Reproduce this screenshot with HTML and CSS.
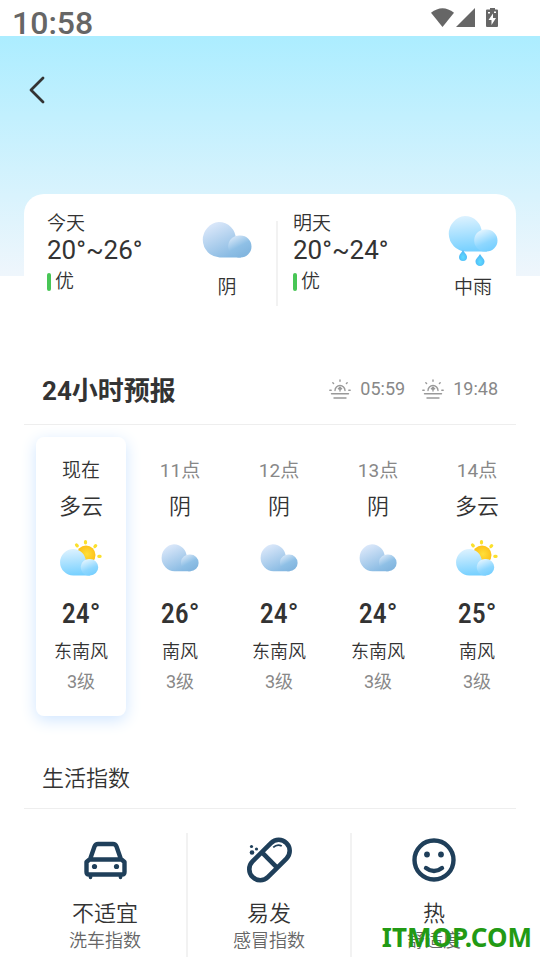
FILE: index.html
```html
<!DOCTYPE html>
<html lang="zh-CN">
<head>
<meta charset="utf-8">
<meta name="viewport" content="width=device-width, initial-scale=1">
<title>24小时预报</title>
<link rel="stylesheet" href="styles.css">
</head>
<body>
<svg class="defs" width="0" height="0" aria-hidden="true">
  <defs>
    <linearGradient id="greyBig" x1="0.2" y1="0" x2="0.7" y2="1"><stop offset="0" stop-color="#dfeafb"/><stop offset="1" stop-color="#86b9e2"/></linearGradient>
    <linearGradient id="greySmall" x1="0.15" y1="0.1" x2="0.6" y2="0.9"><stop offset="0" stop-color="#d3e5f7"/><stop offset="0.55" stop-color="#8fc0e6"/><stop offset="1" stop-color="#83b6df"/></linearGradient>
    <linearGradient id="blueBig" x1="0.4" y1="0" x2="0.5" y2="1"><stop offset="0" stop-color="#ddf2ff"/><stop offset="1" stop-color="#76d0ff"/></linearGradient>
    <linearGradient id="blueSmall" x1="0.2" y1="0.1" x2="0.6" y2="1"><stop offset="0" stop-color="#dff3ff"/><stop offset="0.6" stop-color="#8ed7ff"/><stop offset="1" stop-color="#76cfff"/></linearGradient>
    <radialGradient id="sun" cx="0.55" cy="0.45" r="0.6"><stop offset="0" stop-color="#ffdf3a"/><stop offset="1" stop-color="#fdb90f"/></radialGradient>
    <radialGradient id="drop" cx="0.5" cy="0.65" r="0.6"><stop offset="0" stop-color="#5fdcff"/><stop offset="1" stop-color="#4db4f5"/></radialGradient>
  </defs>
  <symbol id="cloudy" viewBox="0 0 50 36">
    <path fill="url(#greyBig)" d="M16.900 0A16.900 16.900 0 0 1 33.800 17L39 35.500H17.700A17.800 17.800 0 0 1 16.900 0Z"/>
    <path fill="url(#greySmall)" d="M38.500 13.500a11 11 0 0 1 0 22H36a11 11 0 0 1 2.500-22Z"/>
  </symbol>
  <symbol id="rain" viewBox="0 0 50 51">
    <path fill="url(#blueBig)" d="M16.900 0A16.900 16.900 0 0 1 33.800 17L39 35.500H17.700A17.800 17.800 0 0 1 16.900 0Z"/>
    <path fill="url(#blueSmall)" d="M38.500 13.500a11 11 0 0 1 0 22H36a11 11 0 0 1 2.500-22Z"/>
    <path fill="url(#drop)" d="M15 34c1.500 3 4 4.500 4 7a4 4 0 0 1-8 0c0-2.500 2.500-4 4-7Z"/>
    <path fill="url(#drop)" d="M32 38c1.500 3 4.500 4.700 4.500 7.500a4.500 4.500 0 0 1-9 0c0-2.800 3-4.500 4.500-7.500Z"/>
  </symbol>
  <symbol id="partly" viewBox="0 0 42 36">
    <circle cx="26" cy="15" r="9.500" fill="url(#sun)"/>
    <g stroke="#fbe02d" stroke-width="3.200" stroke-linecap="round"><path d="M25.500 1.700v1.100M16.500 5l.8.900M35.700 5.600l-.8.900M38.800 16.300h1.300"/></g>
    <path fill="url(#blueBig)" d="M13.300 9A12.800 12.800 0 0 1 25.800 21L30 35.500H13.300A13.250 13.250 0 0 1 13.300 9Z"/>
    <path fill="url(#blueSmall)" d="M30 19a8.250 8.250 0 0 1 0 16.500H28A8.250 8.250 0 0 1 30 19Z"/>
  </symbol>
  <symbol id="horizon" viewBox="0 0 22 20">
    <g fill="none" stroke="#999" stroke-width="1.400" stroke-linecap="round">
      <path d="M6 11.500a5 5 0 1 1 10 0M11 1v1.300M3.800 3.800l.8.800M18.200 3.800l-.8.800M.8 11.200h1.400M19.800 11.200h1.400M2.500 14.800h17M5 19h12M11 12V9"/>
    </g>
    <path fill="#999" d="m11 7.300 2.500 2.500-1.300 1H9.800l-1.300-1Z"/>
  </symbol>
</svg>

<div class="status">
  <span class="status-time">10:58</span>
  <svg class="status-icons" width="68" height="20" viewBox="0 0 68 20" fill="#666" aria-hidden="true">
    <path d="M0 4.800Q11.500-4.500 23 4.800L11.500 19Z"/>
    <path d="M44 0v19H25Z"/>
    <path d="M59 0h5v1.500h2q1 0 1 1V18q0 1-1 1H56q-1 0-1-1V2.500q0-1 1-1h3Z"/>
    <path fill="#fff" d="M62 5.500 57.500 12H60.500V17L65 10H62ZM57 4h2v1.500h-2ZM63 3.500h2v1.500h-2Z"/>
  </svg>
</div>

<main class="page">
  <header class="topbar">
    <button class="back" type="button" aria-label="返回">
      <svg width="16" height="28" viewBox="0 0 16 28" fill="none" stroke="#333" stroke-width="2.800" stroke-linecap="round" stroke-linejoin="round"><path d="M14 2 2 14 14 26"/></svg>
    </button>
  </header>

  <div class="sheet">
    <section class="days">
      <article class="day">
        <div class="day-info">
          <div class="day-name">今天</div>
          <div class="day-range">20°~26°</div>
          <div class="day-air">优</div>
        </div>
        <div class="day-sky">
          <svg width="50" height="51" viewBox="0 -6 50 51"><use href="#cloudy" width="50" height="36"/></svg>
          <span>阴</span>
        </div>
      </article>
      <article class="day day-next">
        <div class="day-info">
          <div class="day-name">明天</div>
          <div class="day-range">20°~24°</div>
          <div class="day-air">优</div>
        </div>
        <div class="day-sky">
          <svg width="50" height="51"><use href="#rain" width="50" height="51"/></svg>
          <span>中雨</span>
        </div>
      </article>
    </section>

    <section class="forecast">
      <div class="section-head">
        <h2 class="title title-bold">24小时预报</h2>
        <div class="sun-times">
          <span class="sun-time"><svg width="22" height="20"><use href="#horizon"/></svg>05:59</span>
          <span class="sun-time"><svg width="22" height="20"><use href="#horizon"/></svg>19:48</span>
        </div>
      </div>
      <ol class="hours">
        <li class="hour hour-now"><span class="hour-time">现在</span><span class="hour-sky">多云</span><svg class="hour-icon" width="42" height="36"><use href="#partly"/></svg><b class="hour-temp">24°</b><span class="hour-wind">东南风</span><span class="hour-level">3级</span></li>
        <li class="hour"><span class="hour-time">11点</span><span class="hour-sky">阴</span><svg class="hour-icon" width="38" height="36"><use href="#cloudy"/></svg><b class="hour-temp">26°</b><span class="hour-wind">南风</span><span class="hour-level">3级</span></li>
        <li class="hour"><span class="hour-time">12点</span><span class="hour-sky">阴</span><svg class="hour-icon" width="38" height="36"><use href="#cloudy"/></svg><b class="hour-temp">24°</b><span class="hour-wind">东南风</span><span class="hour-level">3级</span></li>
        <li class="hour"><span class="hour-time">13点</span><span class="hour-sky">阴</span><svg class="hour-icon" width="38" height="36"><use href="#cloudy"/></svg><b class="hour-temp">24°</b><span class="hour-wind">东南风</span><span class="hour-level">3级</span></li>
        <li class="hour"><span class="hour-time">14点</span><span class="hour-sky">多云</span><svg class="hour-icon" width="42" height="36"><use href="#partly"/></svg><b class="hour-temp">25°</b><span class="hour-wind">南风</span><span class="hour-level">3级</span></li>
      </ol>
    </section>

    <section class="life">
      <div class="section-head section-head-life">
        <h2 class="title">生活指数</h2>
      </div>
      <ul class="indices">
        <li class="index">
          <svg width="46" height="46" viewBox="0 0 46 46" fill="none" stroke="#1f3f5a" stroke-width="4.400" stroke-linecap="round" stroke-linejoin="round">
            <path d="M8.500 21 12.500 9.500Q13.500 7 16 7H31Q33.500 7 34.500 9.500L38.500 21M7.500 22.500H39.500L42.500 25V35Q42.500 37.500 40 37.500H7Q4.500 37.500 4.500 35V25Z"/>
            <path d="M8.500 39v1.500M38.500 39v1.500" stroke-width="3.600"/>
            <g fill="#1f3f5a" stroke="none"><circle cx="12.500" cy="29.500" r="2.600"/><circle cx="34.500" cy="29.500" r="2.600"/></g>
          </svg>
          <strong>不适宜</strong><span>洗车指数</span>
        </li>
        <li class="index">
          <svg width="46" height="46" viewBox="0 0 46 46" fill="none" stroke="#1f3f5a" stroke-width="4.600">
            <g transform="rotate(-45 23.500 23)"><rect x="-.5" y="12" width="48" height="22" rx="11"/><path d="M23.500 12v22"/><path d="M35 16.800q5.500 0 7 5" stroke-width="1.800"/></g>
            <g fill="#1f3f5a" stroke="none"><circle cx="5.500" cy="9.500" r="1.600"/><circle cx="6" cy="15.500" r="2.300"/><circle cx="10.500" cy="12" r="1.600"/></g>
          </svg>
          <strong>易发</strong><span>感冒指数</span>
        </li>
        <li class="index">
          <svg width="46" height="46" viewBox="0 0 46 46" fill="none" stroke="#1f3f5a" stroke-width="4.400" stroke-linecap="round">
            <circle cx="23" cy="23" r="19.500"/><path d="M15 31q8 6 16 0"/>
            <g fill="#1f3f5a" stroke="none"><circle cx="16" cy="17.500" r="2.900"/><circle cx="30" cy="17.500" r="2.900"/></g>
          </svg>
          <strong>热</strong><span>舒适度</span>
        </li>
      </ul>
    </section>
  </div>
  <div class="brand">ITMOP.COM</div>
</main>
</body>
</html>
```
FILE: styles.css
```css
* { box-sizing: border-box; }
body {
  margin: 0;
  background: #fff;
  color: #333;
  font-family: Roboto, "Noto Sans CJK SC", sans-serif;
}
ol, ul { list-style: none; margin: 0; padding: 0; }
svg { display: block; flex: none; }
.defs { position: absolute; }

.status {
  display: flex;
  justify-content: space-between;
  height: 36px;
  padding: 4px 41px 0 12px;
  color: #666;
}
.status-time { font-size: 32px; font-weight: 500; line-height: 38px; }
.status-icons { margin-top: 4px; }

.page {
  position: relative;
  background: linear-gradient(#acedff, #eff6fc) no-repeat 0 0 / 100% 240px;
}
.topbar { height: 158px; padding: 40px 29px; }
.back { display: block; padding: 0; border: 0; background: none; }

.sheet {
  margin: 0 24px;
  background: #fff;
  border-radius: 20px 20px 0 0;
}
.days { display: grid; grid-template-columns: 1fr 1fr; padding-top: 18px; }
.day {
  display: flex;
  justify-content: space-between;
  padding: 0 18px 0 23px;
  position: relative;
  height: 94px;
}
.day-next::before {
  content: "";
  position: absolute;
  left: 6px;
  top: 9px;
  bottom: 0;
  width: 2px;
  background: #f2f2f2;
}
.day-name, .day-air, .day-sky, .hour-sky, .hour-wind, .hour-now .hour-time { font-weight: 350; }
.day-name { font-size: 19px; line-height: 24px; }
.day-range { font-size: 26px; line-height: 28px; }
.day-air {
  display: flex;
  align-items: center;
  gap: 4px;
  font-size: 19px;
  line-height: 36px;
}
.day-air::before {
  content: "";
  width: 4px;
  height: 18px;
  border-radius: 2px;
  background: #48c656;
}
.day-sky {
  display: flex;
  flex-direction: column;
  align-items: center;
  padding-top: 4px;
  font-size: 19px;
  line-height: 42px;
}

.section-head {
  display: flex;
  align-items: center;
  justify-content: space-between;
  height: 70px;
  margin-top: 49px;
  padding: 0 18px;
  border-bottom: 1px solid #eee;
}
.title { margin: 0; padding-top: 2px; font-size: 22px; font-weight: 350; line-height: 32px; }
.title-bold { font-size: 26px; font-weight: 700; }
.sun-times { display: flex; gap: 17px; padding-bottom: 2px; color: #888; font-size: 18px; }
.sun-time { display: flex; align-items: center; gap: 9px; }

.hours {
  display: grid;
  grid-template-columns: repeat(5, 1fr);
  gap: 9px;
  margin: 12px -6px 0 12px;
}
.hour {
  display: flex;
  flex-direction: column;
  align-items: center;
  padding: 19px 0 20px;
  border-radius: 8px;
}
.hour-now { background: #fff; box-shadow: 0 4px 16px #cfe5ff; }
.hour-time { color: #888; font-size: 19px; line-height: 30px; }
.hour-now .hour-time { color: #333; }
.hour-sky { font-size: 22px; line-height: 42px; }
.hour-icon { margin: 12px 0 17px; }
.hour-temp {
  font-family: "Roboto Condensed", "Liberation Sans Narrow", Roboto, sans-serif;
  font-size: 28px;
  font-weight: 500;
  line-height: 42px;
}
.hour-wind { font-size: 18px; line-height: 33px; }
.hour-level { color: #888; font-size: 18px; line-height: 28px; }

.section-head-life { height: 61px; margin-top: 32px; }
.indices { display: grid; grid-template-columns: repeat(3, 1fr); padding-top: 24px; }
.index {
  display: flex;
  flex-direction: column;
  align-items: center;
  padding: 4px 0 5px;
  border-right: 2px solid #f2f2f2;
}
.index:last-child { border-right: 0; }
.index strong { margin-top: 15px; font-size: 22px; font-weight: 350; line-height: 32px; }
.index span { color: #666; font-size: 18px; font-weight: 350; line-height: 22px; }

.brand {
  position: absolute;
  right: 8px;
  bottom: 2px;
  color: #229a14;
  font-family: "Noto Sans", sans-serif;
  font-size: 26px;
  font-weight: 700;
  line-height: 36px;
}
```
